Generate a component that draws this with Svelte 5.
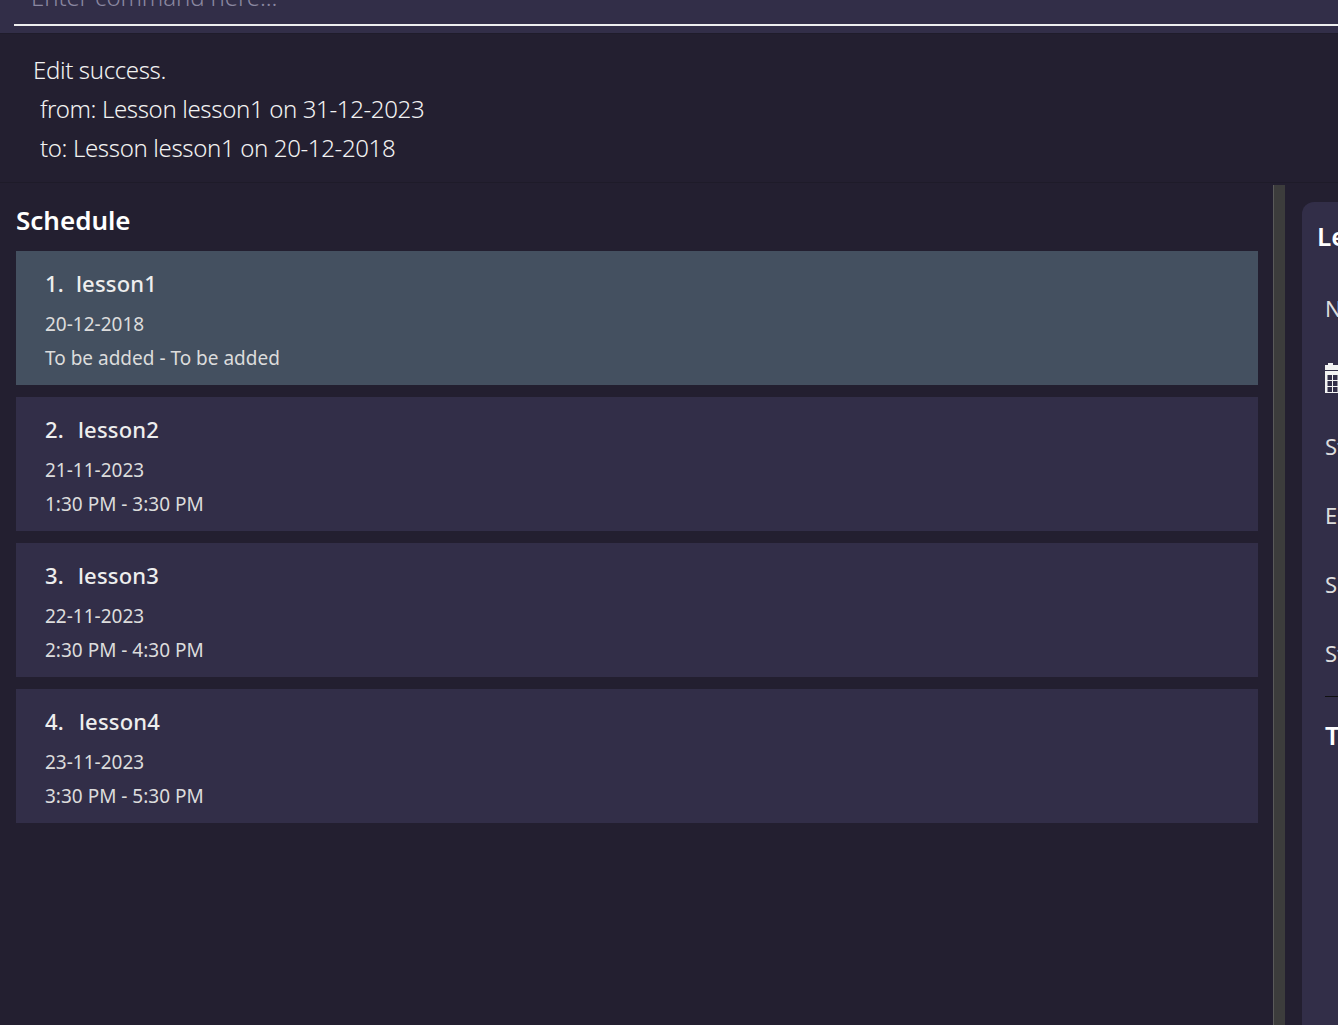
<script>
	const lessons = [
		{ id: 1, gap: 12, name: 'lesson1', date: '20-12-2018', time: 'To be added - To be added', selected: true },
		{ id: 2, gap: 14, name: 'lesson2', date: '21-11-2023', time: '1:30 PM - 3:30 PM' },
		{ id: 3, gap: 14, name: 'lesson3', date: '22-11-2023', time: '2:30 PM - 4:30 PM' },
		{ id: 4, gap: 15, name: 'lesson4', date: '23-11-2023', time: '3:30 PM - 5:30 PM' }
	];
</script>

<main>
	<div class="command">
		<div class="command-input">Enter command here...</div>
	</div>

	<div class="result">
		<p>Edit success.</p>
		<p class="indent">from: Lesson lesson1 on 31-12-2023</p>
		<p class="indent">to: Lesson lesson1 on 20-12-2018</p>
	</div>

	<div class="split">
		<section class="schedule">
			<h2>Schedule</h2>
			<div class="list">
				{#each lessons as lesson (lesson.id)}
					<div class="card" class:selected={lesson.selected}>
						<div class="card-title"><span style="margin-right: {lesson.gap}px">{lesson.id}.</span>{lesson.name}</div>
						<div class="card-line">{lesson.date}</div>
						<div class="card-line">{lesson.time}</div>
					</div>
				{/each}
			</div>
		</section>

		<div class="divider"></div>

		<aside class="details-wrap">
			<div class="details">
				<h2>Lesson details</h2>
				<div class="row">Name: lesson1</div>
				<div class="row icon-row">
					<svg width="15" height="31" viewBox="0 0 15 31" fill="#f2f2f2">
						<path d="M3 1h5v2H3zM0 3h15v5H0z" />
						<path fill-rule="evenodd" d="M0 9h15v22H0zM2.500 13v5h4.500v-5zM8 13v5h4.500v-5zM2.500 19v5h4.500v-5zM8 19v5h4.500v-5zM2.500 25v5h4.500v-5zM8 25v5h4.500v-5z" />
					</svg>
				</div>
				<div class="row">Start: To be added</div>
				<div class="row">End: To be added</div>
				<div class="row">Subject: To be added</div>
				<div class="row">Students: To be added</div>
				<div class="rule"></div>
				<h3>Tasks</h3>
			</div>
		</aside>
	</div>
</main>

<style>
	:global(body) {
		margin: 0;
		background: #231f30;
		font-family: 'Noto Sans', 'Open Sans', sans-serif;
		overflow: hidden;
	}

	main {
		height: 1025px;
		display: flex;
		flex-direction: column;
		overflow: hidden;
		background: #231f30;
	}

	.command {
		height: 34px;
		flex: none;
		box-sizing: border-box;
		padding-left: 14px;
		background: #322e48;
		border-bottom: 1px solid #1f1c2b;
	}

	.command-input {
		height: 26px;
		box-sizing: border-box;
		padding: 0 0 15px 17px;
		border-bottom: 2px solid #eeeeee;
		color: #8a87a0;
		font-size: 24px;
		font-weight: 300;
		line-height: 24px;
		letter-spacing: -0.1px;
		overflow: hidden;
		display: flex;
		align-items: flex-end;
	}

	.result {
		height: 149px;
		flex: none;
		box-sizing: border-box;
		padding: 16px 33px 0;
		border-bottom: 1px solid #1e1b29;
		color: #f2f2f2;
		font-weight: 300;
	}

	.result p {
		margin: 0;
		height: 39px;
		line-height: 39px;
		font-size: 24px;
		letter-spacing: -0.36px;
		white-space: pre;
	}

	.result .indent {
		padding-left: 7px;
	}

	.split {
		flex: 1;
		display: flex;
		min-height: 0;
	}

	.schedule {
		width: 1242px;
		flex: none;
		box-sizing: border-box;
		margin-left: 16px;
	}

	.schedule h2 {
		margin: 0;
		height: 68px;
		line-height: 74px;
		font-size: 26px;
		font-weight: 600;
		color: #ffffff;
	}

	.list {
		display: flex;
		flex-direction: column;
		gap: 12px;
	}

	.card {
		height: 134px;
		box-sizing: border-box;
		padding: 15px 29px 0;
		background: #322e48;
	}

	.card.selected {
		background: #445060;
	}

	.card-title {
		height: 41px;
		line-height: 34px;
		font-size: 22px;
		font-weight: 500;
		letter-spacing: 0.2px;
		color: #eeeeee;
	}

	.card-line {
		height: 34px;
		line-height: 34px;
		font-size: 19px;
		color: #dcdcdc;
	}

	.divider {
		width: 12px;
		flex: none;
		margin: 2px 0 0 15px;
		background: #3c3c3c;
		border-left: 1px solid #5a5a5a;
		box-sizing: border-box;
	}

	.details-wrap {
		flex: 1;
		min-width: 0;
		padding: 19px 0 0 17px;
		overflow: hidden;
	}

	.details {
		width: 400px;
		height: 900px;
		box-sizing: border-box;
		padding: 14px 23px 0 15px;
		background: #322e48;
		border-radius: 12px 0 0 0;
	}

	.details h2 {
		margin: 0;
		height: 40px;
		line-height: 40px;
		font-size: 26px;
		font-weight: 600;
		color: #ffffff;
	}

	.row {
		height: 69px;
		line-height: 69px;
		margin-left: 8px;
		font-size: 22px;
		color: #dcdcdc;
		white-space: nowrap;
	}

	.details h2 + .row {
		margin-top: 18px;
	}

	.icon-row {
		display: flex;
		align-items: center;
	}

	.rule {
		height: 1px;
		margin: 8px 0 0 8px;
		background: #111111;
	}

	.details h3 {
		margin: 20px 0 0 8px;
		font-size: 26px;
		font-weight: 600;
		line-height: 36px;
		color: #ffffff;
	}
</style>
